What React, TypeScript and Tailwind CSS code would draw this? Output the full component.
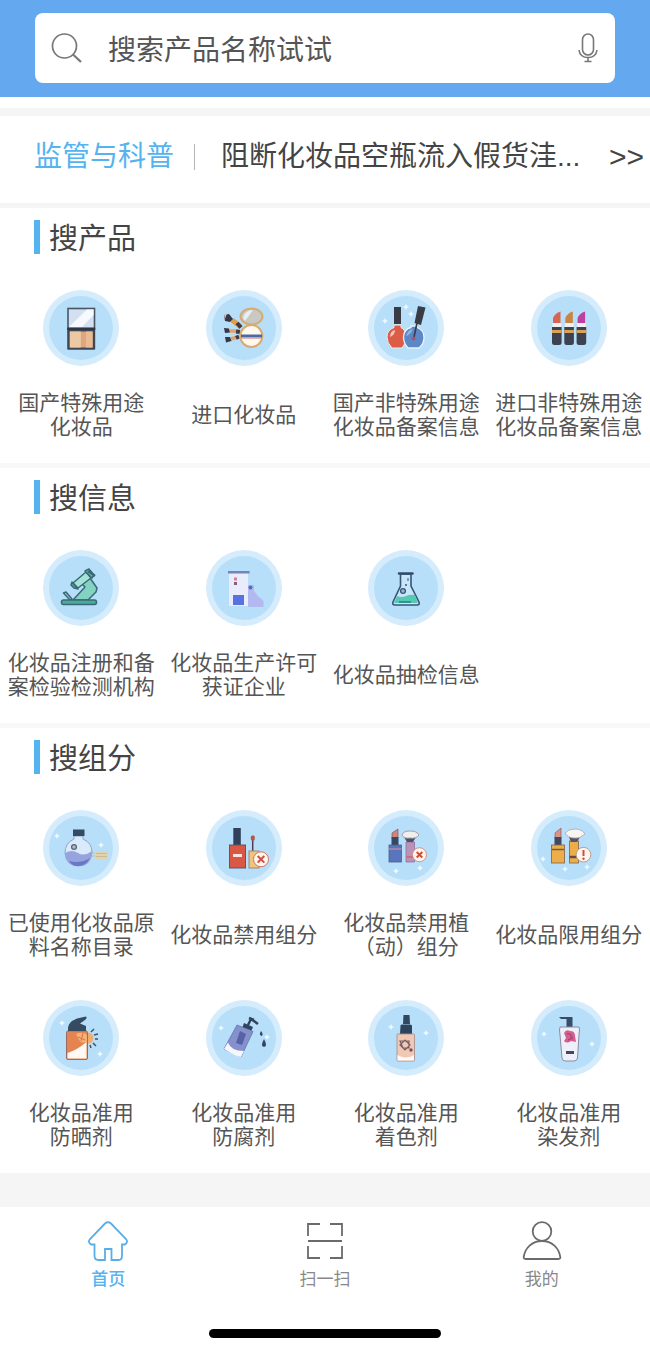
import { Fragment, type ReactNode } from 'react';

type Entry = { lines: string[]; icon: ReactNode };

function Sparkles({ at }: { at: [number, number][] }) {
  return (
    <g fill="#eefaff">
      {at.map(([x, y]) => (
        <path
          key={`${x}-${y}`}
          d={`M${x} ${y - 3}L${x + 1} ${y - 1}L${x + 3} ${y}L${x + 1} ${y + 1}L${x} ${y + 3}L${x - 1} ${y + 1}L${x - 3} ${y}L${x - 1} ${y - 1}Z`}
        />
      ))}
    </g>
  );
}

function Disc({ children }: { children: ReactNode }) {
  return (
    <svg viewBox="0 0 76 76" className="size-[76px]" aria-hidden="true">
      <circle cx="38" cy="38" r="38" fill="#d5ecfc" />
      <circle cx="38" cy="38" r="32" fill="#b7dff9" />
      {children}
    </svg>
  );
}

const compact = (
  <>
    <rect x="25" y="18.5" width="26.5" height="20" fill="#d3e0f2" stroke="#4a5564" strokeWidth="1.6" />
    <path d="M26.5 36.5L44 19.5H50.5V25L39 37H26.5Z" fill="#f6fafe" />
    <rect x="24.2" y="38" width="28" height="21.8" rx="1" fill="#3f4655" />
    <rect x="26.8" y="41.5" width="22.8" height="16" fill="#dfa77e" />
    <rect x="26.8" y="41.5" width="11" height="16" fill="#edc9a3" />
    <rect x="43" y="41.5" width="6.6" height="16" fill="#e8bd93" />
    <path d="M24.2 38.8H52.2" stroke="#2f3745" strokeWidth="2.4" />
  </>
);

const powder = (
  <>
    <ellipse cx="45.5" cy="26.5" rx="11" ry="8" fill="#c9c9c4" stroke="#d9aa70" strokeWidth="2" />
    <path d="M37 28Q39 20 47 20L39 31Z" fill="#e9eef0" />
    <path d="M26 30L35 37" stroke="#e0a04a" strokeWidth="5" />
    <path d="M24 41H33M25 49L33 46.5" stroke="#e2a465" strokeWidth="3.5" />
    <path d="M31 33L35 37.5M30 41.5L34 42M30 48L33 46.5" stroke="#413b49" strokeWidth="4" />
    <path d="M18 25L23 24L27 29L24 32L19 31Z" fill="#393646" />
    <path d="M18 38L23 38.5L24 42.5L19 43ZM19 47L24 47L25.5 51L20 52.5Z" fill="#393646" />
    <path d="M18 24L21 23L19 29Z" fill="#d7c9cc" />
    <circle cx="45.3" cy="46" r="11" fill="#fff8ef" stroke="#d9aa70" strokeWidth="2" />
    <path d="M35 46H56" stroke="#476aa8" strokeWidth="3" />
    <path d="M36 48.3H55" stroke="#d9a7a1" />
  </>
);

const polish = (
  <>
    <Sparkles at={[[17, 31], [38, 17], [43, 24]]} />
    <rect x="26" y="17" width="7" height="17" fill="#393b46" />
    <path d="M26 35H33V37.5Q38 40 38 47Q38 54 34 58H24Q19 53 19 47Q19 40 26 37.5Z" fill="#dc5d47" stroke="#f3e9ed" strokeWidth="1" />
    <path d="M22 47Q22 41 27 40Q27 45 22 47Z" fill="#f5c6bb" />
    <path d="M43 36H49V37.5Q56 40 56 47.5Q56 54 51 58H40Q35.5 53 35.5 47Q36 39 43 37.5Z" fill="#5c88c7" stroke="#eaf4fc" strokeWidth="1.3" />
    <path d="M38 46Q40 40 45 39Q42 45 38 46Z" fill="#8fb9e6" />
    <path d="M50 16L57.5 17.5L53 35L46.5 33Z" fill="#393b46" />
    <path d="M49 33L46 47" stroke="#393b46" strokeWidth="1.6" />
    <circle cx="45.5" cy="48.5" r="2" fill="#a95179" />
  </>
);

const lipsticks = (
  <>
    {[
      { x: 21, color: '#d86551' },
      { x: 33.3, color: '#c88442' },
      { x: 45.6, color: '#bf3fa0' },
    ].map(({ x, color }) => (
      <g key={x} transform={`translate(${x} 0)`}>
        <path d="M1 33V28Q3 23 8.5 21.5V33Z" fill={color} />
        <rect x="0.5" y="33" width="8.8" height="4" fill="#f5edf0" />
        <path d="M0 37H9.6V52.5Q9.6 55 7 55H2.6Q0 55 0 52.5Z" fill="#3d4250" />
        <rect y="40" width="9.6" height="3" fill="#d9a257" />
      </g>
    ))}
  </>
);

const microscope = (
  <g stroke="#386b75" strokeWidth="1.5" strokeLinejoin="round">
    <path d="M30 50L42 37L38 33L47 28L54 38L53 42L45 50Z" fill="#83d3c3" />
    <path d="M30 33L43 22L48 28L35 38Z" fill="#a5e2d8" />
    <path d="M42 21L46 19L51 25L49 28Z" fill="#91b7c7" />
    <path d="M29 32L35 39L31 38L28 35Z" fill="#5a9da6" />
    <path d="M20.5 43L23 42L29 49L27 50Z" fill="#a2c8d3" />
    <rect x="18.5" y="50" width="35" height="4.5" rx="2" fill="#4ba99d" />
    <path d="M45 21L52 26" strokeWidth="2.5" />
  </g>
);

const factory = (
  <>
    <path d="M42 35H48V41L52 46L57.5 51V57H42Z" fill="#b2b9ee" />
    <rect x="23" y="22" width="19" height="34" fill="#e9edfb" />
    <rect x="22" y="21" width="21.5" height="2.5" fill="#7782bd" />
    <rect x="27" y="45" width="11" height="10" fill="#5771df" />
    <rect x="28" y="27.5" width="3" height="3" fill="#d77f91" />
    <rect x="28" y="32" width="3" height="3" fill="#895b83" />
    <circle cx="44.5" cy="37.5" r="2" fill="#5969bd" />
  </>
);

const flask = (
  <>
    <path d="M32.5 24V36L25 52Q24 55 27 55H49Q52 55 51 52L43 36V24Z" fill="#c7e6fa" stroke="#3b5475" strokeWidth="1.6" />
    <path d="M29 46Q34 48 38 46T47 45L50 53H26Z" fill="#55c9b3" />
    <path d="M31 52H43" stroke="#258c88" strokeWidth="1.6" />
    <path d="M31 23.5H44.5" stroke="#344c6a" strokeWidth="2.5" strokeLinecap="round" />
    <circle cx="35" cy="41" r="2.4" fill="#8fb9d4" stroke="#3b5475" strokeWidth="1.3" />
    <circle cx="38" cy="35" r="1" fill="#3b5475" />
    <path d="M40 28V31" stroke="#3b5475" />
  </>
);

const potion = (
  <>
    <Sparkles at={[[14, 26], [58, 35]]} />
    <path d="M47 43H53M49 46H53" stroke="#d8b889" />
    <rect x="52" y="41" width="13" height="8" fill="#e2d3ad" />
    <path d="M53 43.5H64M53 46.5H64" stroke="#c7bb9e" />
    <path d="M31 26H40V29Q49 33 49 42Q48 56 35.5 56Q23 56 22 43Q22 33 31 29Z" fill="#d9eafb" stroke="#8ea5cf" strokeWidth="1" />
    <path d="M22 43Q29 39 35 43T49 41Q49 55 36 56Q23 56 22 43Z" fill="#97a3df" />
    <path d="M26 51Q38 54 47 48Q43 56 35 56Q29 56 26 51Z" fill="#6a76c6" />
    <rect x="30" y="19.5" width="11.5" height="6.5" fill="#344c61" />
    <circle cx="31" cy="37" r="2.4" fill="#b0bcc9" stroke="#576578" strokeWidth="1.3" />
  </>
);

const bannedPolish = (
  <>
    <rect x="27.3" y="18" width="7.5" height="17" fill="#2f4058" />
    <rect x="23.5" y="35" width="16" height="23" fill="#d95745" stroke="#665365" strokeWidth="1" />
    <rect x="27" y="44" width="9" height="3" fill="#f9e4df" />
    <path d="M46.7 29V42" stroke="#4d3f53" strokeWidth="1.5" />
    <rect x="44.8" y="25.5" width="4" height="5" rx="1.5" fill="#ad594d" />
    <rect x="43" y="41" width="10" height="17" fill="#edc57c" stroke="#a7837b" strokeWidth="1" />
    <circle cx="55" cy="49.3" r="7.5" fill="#fff6ef" stroke="#cb7866" strokeWidth="1" />
    <path d="M51.7 46L58.3 52.6M58.3 46L51.7 52.6" stroke="#d34c3d" strokeWidth="2" />
  </>
);

const bannedPlant = (
  <>
    <Sparkles at={[[28, 61], [52, 58]]} />
    <path d="M24 28V23L30 19V28Z" fill="#d58377" stroke="#7e5967" strokeWidth=".7" />
    <rect x="23.5" y="27" width="7" height="8" fill="#354865" />
    <rect x="21" y="35" width="12.5" height="17" fill="#5875bd" stroke="#4e608d" strokeWidth=".8" />
    <path d="M21 39H33.5" stroke="#b38aac" strokeWidth="1.5" />
    <path d="M38 32H46.5V52H38Z" fill="#bb91b8" stroke="#8f7199" strokeWidth=".8" />
    <path d="M38 47H46" stroke="#d36b75" strokeWidth="2" />
    <path d="M36 27H48L45 32H39Z" fill="#475569" />
    <path d="M34 25Q35 21 42 21Q49 21 51 25Q48 29 42 28Q36 29 34 25Z" fill="#f2eeee" stroke="#9d8b91" strokeWidth=".8" />
    <circle cx="51.5" cy="44.7" r="7" fill="#fff5f0" stroke="#cf8b7c" strokeWidth=".9" />
    <path d="M48.7 42L54.3 47.5M54.3 42L48.7 47.5" stroke="#cf4e35" strokeWidth="2" />
  </>
);

const restricted = (
  <>
    <Sparkles at={[[12, 49], [34, 59], [56, 57]]} />
    <path d="M24 28V23L30 18V28Z" fill="#df9385" stroke="#81656b" strokeWidth=".7" />
    <rect x="23.5" y="27" width="7" height="8" fill="#41495e" />
    <rect x="20.5" y="35" width="13" height="18" fill="#edae49" stroke="#896d54" strokeWidth=".9" />
    <path d="M21 39.5H33" stroke="#725b49" strokeWidth="1.5" />
    <rect x="38.5" y="31" width="9" height="22" fill="#edae49" stroke="#896d54" strokeWidth=".9" />
    <path d="M38.5 47H47" stroke="#654c46" strokeWidth="2.5" />
    <path d="M38 27H49L46 32H40Z" fill="#535465" />
    <path d="M34 23Q37 19 44 19Q51 19 54 24Q49 29 43 28Q37 28 34 23Z" fill="#faf5f1" stroke="#a5a5ac" strokeWidth=".8" />
    <circle cx="52.5" cy="44.7" r="7.3" fill="#fff7ef" stroke="#b89278" strokeWidth=".9" />
    <path d="M52.5 40V46" stroke="#d24c37" strokeWidth="2" />
    <circle cx="52.5" cy="48.7" r="1.2" fill="#d24c37" />
  </>
);

const sunscreen = (
  <>
    <Sparkles at={[[19, 23], [57, 54]]} />
    <path d="M48 32L51 29M51 35L55 34M52 39H55M50 43L53 46M47 45L48 48" stroke="#42526b" strokeWidth="1.5" />
    <circle cx="45" cy="38" r="5.5" fill="#efad70" />
    <rect x="23.5" y="31" width="21" height="28.5" rx="1.5" fill="#e48450" stroke="#9a6c61" strokeWidth="1" />
    <path d="M24.5 53Q34 50 43.5 42V58.5H24.5Z" fill="#fff9f5" />
    <path d="M33 34Q41 31 44 35V42Q38 44 36 40Z" fill="#f3b274" />
    <path d="M35 37L42 40M40 33L38 41" stroke="#dd734b" />
    <path d="M25 31V29Q25 24 29 21L34 18.5L43 16.5Q44.5 18 42 20L37 23.5L43 26V31Z" fill="#344b61" />
  </>
);

const preservative = (
  <>
    <Sparkles at={[[15, 28], [61, 37]]} />
    <path d="M31 25L47 31.5L35 57L18 49Z" fill="#8590cc" stroke="#7082b4" strokeWidth="1" strokeLinejoin="round" />
    <path d="M22 42.5Q25 51 38 51L35 57Q33 58 18 49Z" fill="#f5f7fc" />
    <path d="M34 31L40 34L36 45L30 43Z" fill="#5662a6" />
    <path d="M38 23L47 27L45.5 30.5L36.5 27Z" fill="#30435e" />
    <path d="M42 25L45 19L52 24M43 18L48 20" fill="none" stroke="#30435e" strokeWidth="2.5" />
    <path d="M55 31Q58 35 55.5 36Q52.5 35 55 31ZM58 39Q62 46 58 47Q54 46 58 39Z" fill="#344762" />
  </>
);

const colorant = (
  <>
    <Sparkles at={[[23, 27], [58, 33]]} />
    <path d="M35.5 15H41.5L42 24H35Z" fill="#304661" />
    <path d="M32.5 26Q32 24.5 34 24.5H42Q44 24.5 44 26V34H32Z" fill="#2e425c" />
    <rect x="29" y="34" width="17.5" height="27" rx="1" fill="#f0c8b4" stroke="#a69391" strokeWidth=".9" />
    <path d="M29.5 55Q38 60 46 55V60.5H29.5Z" fill="#fffaf7" />
    <path d="M32 41H41V48H35Z M32 45L37 40L42 45L37 50Z" fill="none" stroke="#765e67" strokeWidth="1.2" />
    <circle cx="43" cy="50" r="1.7" fill="#765362" />
  </>
);

const dye = (
  <>
    <Sparkles at={[[13, 34], [61, 44]]} />
    <path d="M28 17H41.5V27H35.5V19H30Z" fill="#374e68" />
    <path d="M29 27H48Q49 29 48 35L46.5 58Q46 61 43 61H34Q31.5 61 31 58L29 35Q28 29 29 27Z" fill="#edf0fb" stroke="#8d8ca0" strokeWidth="1" />
    <path d="M33 33Q35 29 39 31Q44 31 44 36L45 42L40 41Q36 44 33 41L35 38Z" fill="#d25f8c" />
    <path d="M36 34Q41 33 40 38M37 40L42 38" fill="none" stroke="#983d6b" strokeWidth="1" />
    <rect x="35" y="51" width="8" height="3" fill="#4b4657" />
  </>
);

const sections: { title: string; entries: Entry[] }[] = [
  {
    title: '搜产品',
    entries: [
      { lines: ['国产特殊用途', '化妆品'], icon: compact },
      { lines: ['进口化妆品'], icon: powder },
      { lines: ['国产非特殊用途', '化妆品备案信息'], icon: polish },
      { lines: ['进口非特殊用途', '化妆品备案信息'], icon: lipsticks },
    ],
  },
  {
    title: '搜信息',
    entries: [
      { lines: ['化妆品注册和备', '案检验检测机构'], icon: microscope },
      { lines: ['化妆品生产许可', '获证企业'], icon: factory },
      { lines: ['化妆品抽检信息'], icon: flask },
    ],
  },
  {
    title: '搜组分',
    entries: [
      { lines: ['已使用化妆品原', '料名称目录'], icon: potion },
      { lines: ['化妆品禁用组分'], icon: bannedPolish },
      { lines: ['化妆品禁用植', '（动）组分'], icon: bannedPlant },
      { lines: ['化妆品限用组分'], icon: restricted },
      { lines: ['化妆品准用', '防晒剂'], icon: sunscreen },
      { lines: ['化妆品准用', '防腐剂'], icon: preservative },
      { lines: ['化妆品准用', '着色剂'], icon: colorant },
      { lines: ['化妆品准用', '染发剂'], icon: dye },
    ],
  },
];

const tabs = [
  {
    label: '首页',
    active: true,
    icon: (
      <path d="M17 2.5Q20 0 23 2.5L38 18Q40.5 21 37 23.5H34V35Q34 39 30.5 39H23.5V28H17V39H10.5Q6.5 39 6.5 35V23.5H3Q-.5 21 2 18Z" />
    ),
  },
  {
    label: '扫一扫',
    active: false,
    icon: <path d="M15 3H3V15M25 3H37V15M3 25V37H15M37 25V37H25M3 20H37" />,
  },
  {
    label: '我的',
    active: false,
    icon: (
      <>
        <circle cx="20" cy="10.5" r="9.3" />
        <path d="M20 20C10 20 3 27 1.7 36Q1.5 38 3.5 38H36.5Q38.5 38 38.3 36C37 27 30 20 20 20Z" />
      </>
    ),
  },
];

function Section({ title, entries }: { title: string; entries: Entry[] }) {
  return (
    <section className="bg-white pt-3 pb-6">
      <h2 className="ml-[34px] flex h-[34px] items-center gap-[9px] font-['Noto_Sans_CJK_SC',sans-serif] text-[29px] text-[#444444]">
        <span className="h-full w-[6px] bg-[#55b4ef]" />
        {title}
      </h2>
      <div className="mt-9 grid grid-cols-4 gap-y-[41px]">
        {entries.map(({ lines, icon }) => (
          <a key={lines.join('')} href="#" className="flex flex-col items-center gap-[25px]">
            <Disc>{icon}</Disc>
            <span className="flex h-12 items-center text-center text-[21px] leading-6 whitespace-nowrap text-[#555555]">
              <span>
                {lines.map((line, i) => (
                  <Fragment key={line}>
                    {i > 0 && <br />}
                    {line}
                  </Fragment>
                ))}
              </span>
            </span>
          </a>
        ))}
      </div>
    </section>
  );
}

export default function App() {
  return (
    <div className="flex min-h-screen flex-col bg-white font-['Liberation_Sans','Noto_Sans_CJK_SC',sans-serif]">
      <header className="bg-[#64a9f0] px-[35px] pt-[13px] pb-[14px]">
        <form role="search" className="flex h-[70px] items-center rounded-lg bg-white pr-[15px] pl-4">
          <svg viewBox="0 0 32 32" className="size-8 shrink-0" fill="none" stroke="#777777" strokeWidth="1.7" aria-hidden="true">
            <circle cx="13.5" cy="14" r="12" />
            <path d="M22 22.5L30 30" strokeWidth="2.2" />
          </svg>
          <input
            type="search"
            aria-label="搜索产品名称"
            placeholder="搜索产品名称试试"
            className="ml-[25px] h-full min-w-0 flex-1 bg-transparent font-['Noto_Sans_CJK_SC',sans-serif] text-[28px] text-[#444444] outline-none placeholder:text-[#555555]"
          />
          <button type="button" aria-label="语音搜索">
            <svg viewBox="0 0 24 32" className="h-8 w-6" fill="none" stroke="#777777" strokeWidth="1.6" aria-hidden="true">
              <rect x="6.5" y="2" width="11" height="21" rx="5.5" />
              <path d="M3 18Q4 25.5 12 25.5T21 18M12 25.5V29M8.5 29.5H15.5" />
            </svg>
          </button>
        </form>
      </header>

      <main className="bg-[#f5f5f5] pb-[34px]">
        <div className="h-[11px] bg-white" />
        <a href="#" className="mt-2 flex h-[87px] items-center bg-white pr-[6px] pb-[6px] pl-[34px] text-[28px] whitespace-nowrap text-[#444444]">
          <span className="text-[#55b4ef]">监管与科普</span>
          <span className="ml-5 h-[26px] w-px bg-[#b5b5b5]" />
          <span className="ml-[26px] min-w-0 flex-1">阻断化妆品空瓶流入假货洼...</span>
          <span className="text-[30px]">&gt;&gt;</span>
        </a>
        <div className="mt-[5px] flex flex-col gap-[5px] bg-[#f8f8f8]">
          {sections.map((section) => (
            <Section key={section.title} title={section.title} entries={section.entries} />
          ))}
        </div>
      </main>

      <nav className="grid grid-cols-3 pt-[14px]">
        {tabs.map(({ label, active, icon }) => (
          <a
            key={label}
            href="#"
            aria-current={active ? 'page' : undefined}
            className={`flex flex-col items-center gap-[7px] text-[17px] leading-6 ${active ? 'font-medium text-[#55b4ef]' : 'text-[#888888]'}`}
          >
            <svg
              viewBox="0 0 40 40"
              className="size-10"
              fill="none"
              stroke={active ? '#5aaee8' : '#6b6b6b'}
              strokeWidth="1.8"
              aria-hidden="true"
            >
              {icon}
            </svg>
            {label}
          </a>
        ))}
      </nav>
      <div className="mx-auto mt-auto mb-[14px] h-[9px] w-[232px] rounded-full bg-black" />
    </div>
  );
}
